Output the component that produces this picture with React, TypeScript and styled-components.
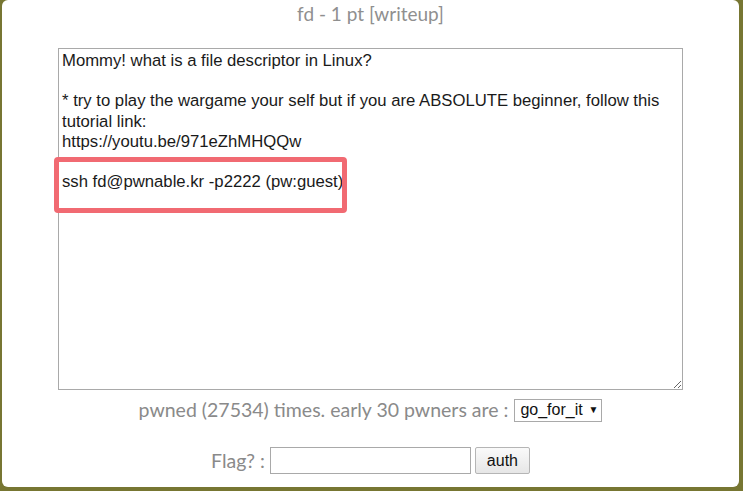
import React from "react";
import styled, { createGlobalStyle } from "styled-components";

const Global = createGlobalStyle`
  html, body { margin: 0; padding: 0; background: #777632; height: 491px; overflow: hidden; }
  #root { height: 491px; }
`;

const Panel = styled.div`
  box-sizing: border-box;
  margin: 0 4px 0 2px;
  height: 487px;
  background: #ffffff;
  border-radius: 6px;
  display: flex;
  flex-direction: column;
  align-items: center;
`;

const Title = styled.div`
  font-family: Lato, "Open Sans", sans-serif;
  font-size: 19px;
  color: #8f8f8f;
  line-height: 24px;
  margin-top: 2px;
`;

const Box = styled.div`
  position: relative;
  margin-top: 22px;
`;

const Area = styled.textarea`
  box-sizing: border-box;
  display: block;
  width: 625px;
  height: 342px;
  border: 1px solid #a9a9a9;
  padding: 2px 3px;
  margin: 0;
  font-family: "Liberation Sans", Arial, sans-serif;
  font-size: 16.7px;
  line-height: 20.2px;
  color: #1a1a1a;
  resize: both;
  outline: none;
`;

const Highlight = styled.div`
  position: absolute;
  left: -4px;
  top: 109px;
  width: 293px;
  height: 56px;
  box-sizing: border-box;
  border: 5px solid #f16a72;
  border-radius: 4px;
  pointer-events: none;
`;

const Row = styled.div<{ $top: number }>`
  display: flex;
  align-items: center;
  gap: 5px;
  margin-top: ${(p) => p.$top}px;
  font-family: Lato, "Open Sans", sans-serif;
  font-size: 19.5px;
  line-height: 24px;
  color: #8a8a8a;
`;

const Select = styled.div`
  box-sizing: border-box;
  height: 23px;
  width: 88px;
  margin-left: 1px;
  border: 1px solid #a9a9a9;
  display: flex;
  align-items: center;
  justify-content: space-between;
  padding: 0 3px 0 5px;
  font-family: "Liberation Sans", Arial, sans-serif;
  font-size: 16px;
  color: #111;
`;

const Caret = styled.span`
  font-size: 10px;
`;

const Input = styled.input`
  box-sizing: border-box;
  width: 201px;
  height: 27px;
  border: 1px solid #a9a9a9;
  margin: 0;
`;

const Button = styled.button`
  box-sizing: border-box;
  width: 55px;
  height: 27px;
  border: 1px solid #b5b5b5;
  border-radius: 2px;
  background: linear-gradient(#fafafa, #e6e6e6);
  font-family: "Liberation Sans", Arial, sans-serif;
  font-size: 16px;
  color: #111;
  margin: 0 0 0 -1px;
  padding: 0;
`;

const text = `Mommy! what is a file descriptor in Linux?

* try to play the wargame your self but if you are ABSOLUTE beginner, follow this tutorial link:
https://youtu.be/971eZhMHQQw

ssh fd@pwnable.kr -p2222 (pw:guest)
`;

export default function App() {
  return (
    <>
      <Global />
      <Panel>
        <Title>fd - 1 pt [writeup]</Title>
        <Box>
          <Area defaultValue={text} spellCheck={false} />
          <Highlight />
        </Box>
        <Row $top={8}>
          pwned (27534) times. early 30 pwners are :
          <Select>
            go_for_it <Caret>▼</Caret>
          </Select>
        </Row>
        <Row $top={25}>
          Flag? :
          <Input />
          <Button>auth</Button>
        </Row>
      </Panel>
    </>
  );
}
